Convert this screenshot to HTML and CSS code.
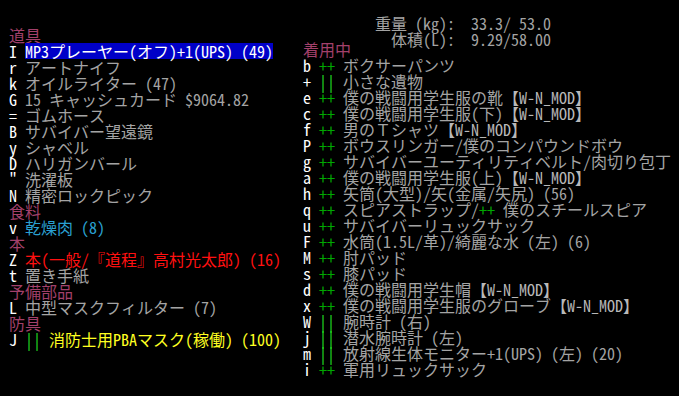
FILE: index.html
```html
<!DOCTYPE html>
<html lang="ja">
<head>
    <meta charset="UTF-8">
    <meta name="viewport" content="width=device-width, initial-scale=1.0">
    <title>所持品</title>
    <link rel="stylesheet" href="styles.css">
</head>
<body>
    <div class="screen">
        <section class="pane inventory">
            <div class="row"><span class="head">道具</span></div>
            <div class="row"><span class="key">I</span><span class="sel">MP3プレーヤー(オフ)+1(UPS) (49)</span></div>
            <div class="row"><span class="key">r</span><span>アートナイフ</span></div>
            <div class="row"><span class="key">k</span><span>オイルライター (47)</span></div>
            <div class="row"><span class="key">G</span><span>15 キャッシュカード $9064.82</span></div>
            <div class="row"><span class="key">=</span><span>ゴムホース</span></div>
            <div class="row"><span class="key">B</span><span>サバイバー望遠鏡</span></div>
            <div class="row"><span class="key">y</span><span>シャベル</span></div>
            <div class="row"><span class="key">D</span><span>ハリガンバール</span></div>
            <div class="row"><span class="key">"</span><span>洗濯板</span></div>
            <div class="row"><span class="key">N</span><span>精密ロックピック</span></div>
            <div class="row"><span class="head">食料</span></div>
            <div class="row"><span class="key">v</span><span class="food">乾燥肉 (8)</span></div>
            <div class="row"><span class="head">本</span></div>
            <div class="row"><span class="key">Z</span><span class="book">本(一般/『道程』高村光太郎) (16)</span></div>
            <div class="row"><span class="key">t</span><span>置き手紙</span></div>
            <div class="row"><span class="head">予備部品</span></div>
            <div class="row"><span class="key">L</span><span>中型マスクフィルター (7)</span></div>
            <div class="row"><span class="head">防具</span></div>
            <div class="row"><span class="key">J</span><span class="on">||</span><span class="active">消防士用PBAマスク(稼働) (100)</span></div>
        </section>

        <section class="pane worn">
            <div class="stats">
                <div class="row"><span>重量 (kg):  33.3/ 53.0</span></div>
                <div class="row"><span>  体積(L):  9.29/58.00</span></div>
            </div>
            <div class="list">
                <div class="row"><span class="head">着用中</span></div>
                <div class="row"><span class="key">b</span><span class="pp">++</span><span>ボクサーパンツ</span></div>
                <div class="row"><span class="key">+</span><span class="on">||</span><span>小さな遺物</span></div>
                <div class="row"><span class="key">e</span><span class="pp">++</span><span>僕の戦闘用学生服の靴<span class="mod">【W-N_MOD】</span></span></div>
                <div class="row"><span class="key">c</span><span class="pp">++</span><span>僕の戦闘用学生服(下)<span class="mod">【W-N_MOD】</span></span></div>
                <div class="row"><span class="key">f</span><span class="pp">++</span><span>男のＴシャツ<span class="mod">【W-N_MOD】</span></span></div>
                <div class="row"><span class="key">P</span><span class="pp">++</span><span>ボウスリンガー/僕のコンパウンドボウ</span></div>
                <div class="row"><span class="key">g</span><span class="pp">++</span><span>サバイバーユーティリティベルト/肉切り包丁</span></div>
                <div class="row"><span class="key">a</span><span class="pp">++</span><span>僕の戦闘用学生服(上)<span class="mod">【W-N_MOD】</span></span></div>
                <div class="row"><span class="key">h</span><span class="pp">++</span><span>矢筒(大型)/矢(金属/矢尻) (56)</span></div>
                <div class="row"><span class="key">q</span><span class="pp">++</span><span>スピアストラップ/<span class="pp">++</span> 僕のスチールスピア</span></div>
                <div class="row"><span class="key">u</span><span class="pp">++</span><span>サバイバーリュックサック</span></div>
                <div class="row"><span class="key">F</span><span class="pp">++</span><span>水筒(1.5L/革)/綺麗な水 (左) (6)</span></div>
                <div class="row"><span class="key">M</span><span class="pp">++</span><span>肘パッド</span></div>
                <div class="row"><span class="key">s</span><span class="pp">++</span><span>膝パッド</span></div>
                <div class="row"><span class="key">d</span><span class="pp">++</span><span>僕の戦闘用学生帽<span class="mod">【W-N_MOD】</span></span></div>
                <div class="row"><span class="key">x</span><span class="pp">++</span><span>僕の戦闘用学生服のグローブ<span class="mod">【W-N_MOD】</span></span></div>
                <div class="row"><span class="key">W</span><span class="on">||</span><span>腕時計 (右)</span></div>
                <div class="row"><span class="key">j</span><span class="on">||</span><span>潜水腕時計 (左)</span></div>
                <div class="row"><span class="key">m</span><span class="on">||</span><span>放射線生体モニター+1(UPS) (左) (20)</span></div>
                <div class="row"><span class="key">i</span><span class="pp">++</span><span>軍用リュックサック</span></div>
            </div>
        </section>
    </div>
</body>
</html>
```

FILE: styles.css
```css
body {
    margin: 0;
    background-color: #000;
    color: #a4a4a4;
    font-family: "Noto Sans Mono CJK JP", "DejaVu Sans Mono", "Noto Sans CJK JP", monospace;
    font-size: 16px;
    line-height: 16px;
}

.screen {
    display: flex;
    padding-left: 9px;
    height: 396px;
    box-sizing: border-box;
    overflow: hidden;
}

/* one terminal line: cells of 8x16, a blank cell between fields */
.row {
    display: flex;
    gap: 8px;
    height: 16px;
    white-space: pre;
}

.row span {
    display: inline-block;
    height: 16px;
    line-height: 16px;
    vertical-align: top;
}

.inventory {
    width: 294px;
    margin-top: 27px;
}

.stats {
    margin-top: 15px;
    padding-left: 72px;
}

.list {
    margin-top: -6px;
}

.head {
    color: #a3406b;
}

.key {
    color: #fff;
}

.sel {
    background-color: #0000c8;
    color: #fff;
}

.pp {
    color: #00a800;
}

.on {
    color: #24e024;
}

.mod {
    color: #b8b8b8;
}

.food {
    color: #2aa0d2;
}

.book {
    color: #ff1010;
}

.active {
    color: #ffff20;
}
```
